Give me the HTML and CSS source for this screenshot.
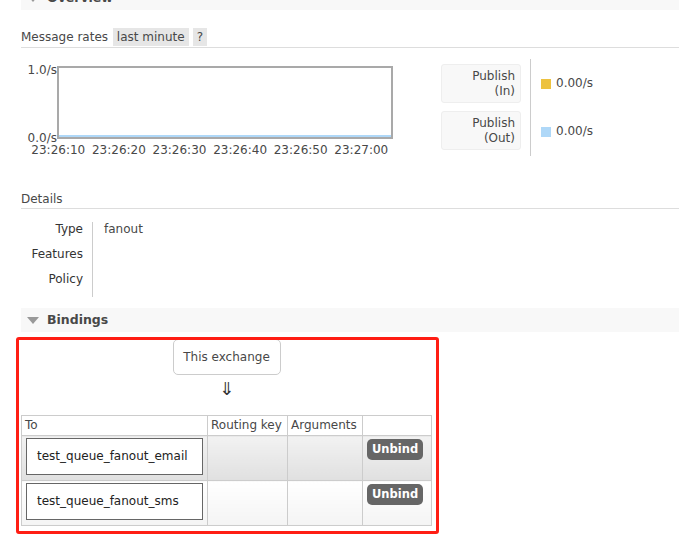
FILE: index.html
```html
<!DOCTYPE html>
<html>
<head>
<meta charset="utf-8">
<link rel="stylesheet" href="styles.css">
</head>
<body>
<div class="page">
  <div class="section-head overview"><span class="tri"></span>Overview</div>
  <div class="rates-bar">Message rates <span class="pill">last minute</span><span class="pill q">?</span></div>
  <div class="chart-row">
    <div class="chart">
      <div class="plot-wrap">
        <div class="ylabels"><span>1.0/s</span><span>0.0/s</span></div>
        <div class="plot"><div class="series"></div></div>
      </div>
      <div class="xlabels">
        <span>23:26:10</span><span>23:26:20</span><span>23:26:30</span><span>23:26:40</span><span>23:26:50</span><span>23:27:00</span>
      </div>
    </div>
    <div class="legend">
      <div class="legend-labels">
        <div class="legend-box">Publish<br>(In)</div>
        <div class="legend-box">Publish<br>(Out)</div>
      </div>
      <div class="legend-values">
        <div class="lv"><span class="swatch in"></span>0.00/s</div>
        <div class="lv"><span class="swatch out"></span>0.00/s</div>
      </div>
    </div>
  </div>

  <div class="sub-head">Details</div>
  <table class="facts">
    <tr><th>Type</th><td>fanout</td></tr>
    <tr><th>Features</th><td></td></tr>
    <tr><th>Policy</th><td></td></tr>
  </table>

  <div class="section-head bindings-head"><span class="tri"></span>Bindings</div>
  <div class="bindings-area">
    <div class="bindings-inner">
      <div class="exchange-box">This exchange</div>
      <div class="arrow">⇓</div>
      <table class="bindings">
        <thead>
          <tr><th class="c-to">To</th><th class="c-rk">Routing key</th><th class="c-args">Arguments</th><th class="c-act"></th></tr>
        </thead>
        <tbody>
          <tr class="alt1">
            <td><div class="queue-box">test_queue_fanout_email</div></td>
            <td></td><td></td>
            <td><span class="btn">Unbind</span></td>
          </tr>
          <tr class="alt2">
            <td><div class="queue-box">test_queue_fanout_sms</div></td>
            <td></td><td></td>
            <td><span class="btn">Unbind</span></td>
          </tr>
        </tbody>
      </table>
    </div>
    <div class="highlight"></div>
  </div>
</div>
</body>
</html>
```

FILE: styles.css
```css
html, body {
  margin: 0;
  padding: 0;
  background: #fff;
}
body {
  font-family: "DejaVu Sans", Verdana, sans-serif;
  font-size: 12px;
  color: #484848;
  overflow: hidden;
}
.page {
  padding-left: 21px;
}
.section-head {
  background: #f8f8f8;
  height: 24px;
  line-height: 24px;
  font-weight: bold;
  font-size: 12.5px;
  display: flex;
  align-items: center;
  padding-left: 6px;
  color: #484848;
}
.overview {
  margin-top: -14px;
}
.tri {
  width: 0;
  height: 0;
  border-left: 6px solid transparent;
  border-right: 6px solid transparent;
  border-top: 7px solid #999;
  margin-right: 8px;
  margin-top: 1px;
}
.rates-bar {
  margin-top: 18px;
  height: 18px;
  line-height: 18px;
  border-bottom: 1px solid #ddd;
  padding-bottom: 1px;
  display: flex;
  align-items: center;
  white-space: pre;
}
.pill {
  background: #e6e6e6;
  padding: 0 4px;
  margin-left: 1px;
}
.pill.q {
  margin-left: 4px;
}
.chart-row {
  display: flex;
  margin-top: 11px;
  height: 97px;
}
.chart {
  width: 420px;
}
.plot-wrap {
  display: flex;
  margin-top: 7px;
}
.ylabels {
  width: 34px;
  height: 80px;
  display: flex;
  flex-direction: column;
  justify-content: space-between;
  align-items: flex-end;
  line-height: 12px;
  margin-top: -4px;
  margin-left: 2px;
  position: relative;
  top: 2px;
}
.plot {
  width: 332px;
  height: 69px;
  border: 2px solid #a9a9a9;
  display: flex;
  align-items: flex-end;
}
.series {
  width: 100%;
  height: 2px;
  background: #afd8f8;
}
.xlabels {
  display: flex;
  margin-left: 7px;
  margin-top: 1px;
  line-height: 14px;
}
.xlabels span {
  width: 60.6px;
  text-align: center;
}
.legend {
  display: flex;
}
.legend-labels {
  display: flex;
  flex-direction: column;
  gap: 8px;
  padding-top: 5px;
  padding-right: 9px;
  border-right: 1px solid #ccc;
}
.legend-box {
  background: #f8f8f8;
  border: 1px solid #eee;
  border-radius: 3px;
  text-align: right;
  padding: 4px 5px 0 0;
  box-sizing: border-box;
  line-height: 15px;
  width: 80px;
  height: 39px;
}
.legend-values {
  display: flex;
  flex-direction: column;
  padding-left: 10px;
  padding-top: 17px;
  gap: 33px;
}
.lv {
  display: flex;
  align-items: center;
  line-height: 15px;
}
.swatch {
  width: 10px;
  height: 10px;
  margin-right: 5px;
}
.swatch.in { background: #edc240; }
.swatch.out { background: #afd8f8; }

.sub-head {
  margin-top: 35px;
  line-height: 16px;
  padding-bottom: 1px;
  border-bottom: 1px solid #ddd;
}
.facts {
  border-collapse: collapse;
  margin-top: 13px;
}
.facts th {
  font-weight: normal;
  text-align: right;
  width: 62px;
  padding: 0 9px 0 0;
  height: 25px;
  vertical-align: top;
  line-height: 15px;
  color: #333;
}
.facts td {
  border-left: 1px solid #ccc;
  padding: 0 0 0 11px;
  vertical-align: top;
  line-height: 15px;
}

.bindings-head {
  margin-top: 11px;
}
.bindings-area {
  position: relative;
  margin-left: -5px;
  padding: 7px 7px 8px 7px;
  width: 411px;
}
.bindings-inner {
  display: flex;
  flex-direction: column;
  align-items: center;
  width: 411px;
  margin-left: -2px;
}
.exchange-box {
  border: 1px solid #ccc;
  border-radius: 5px;
  width: 106px;
  height: 34px;
  line-height: 34px;
  text-align: center;
  margin-left: 0;
}
.arrow {
  font-size: 18px;
  line-height: 20px;
  margin-top: 4px;
  color: #333;
  margin-left: 0;
}
.bindings {
  margin-top: 16px;
  border-collapse: collapse;
  border: 1px solid #ccc;
  width: 411px;
}
.bindings th {
  font-weight: normal;
  text-align: left;
  border: 1px solid #ccc;
  padding: 0 3px;
  height: 19px;
  line-height: 15px;
  background: #fff;
}
.c-to { width: 179px; }
.c-rk { width: 73px; }
.c-args { width: 68px; }
.bindings td {
  border: 1px solid #ccc;
  padding: 2px 4px;
  height: 40px;
  vertical-align: top;
}
.alt1 td {
  background: linear-gradient(#f2f2f2, #e0e0e0);
}
.alt2 td {
  background: linear-gradient(#ffffff, #f4f4f4);
}
.queue-box {
  border: 1px solid #666;
  background: #fff;
  height: 35px;
  line-height: 35px;
  padding-left: 10px;
  color: #222;
}
.btn {
  display: inline-block;
  background: #666;
  color: #fff;
  font-weight: bold;
  font-size: 11.5px;
  border-radius: 5px;
  padding: 0 5px;
  height: 21px;
  line-height: 20px;
  margin-top: 1px;
}
.highlight {
  position: absolute;
  left: 0;
  top: 5px;
  right: 2px;
  bottom: 0;
  border: 3px solid #ff1e14;
  border-radius: 3px;
  pointer-events: none;
}
```
